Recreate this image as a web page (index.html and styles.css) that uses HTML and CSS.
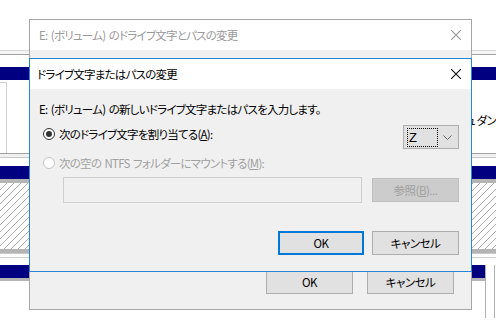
FILE: index.html
```html
<!DOCTYPE html>
<html lang="ja">
<head>
  <meta charset="UTF-8">
  <title>ドライブ文字またはパスの変更</title>
  <link rel="stylesheet" href="styles.css">
</head>
<body>

  <!-- Disk management window behind the dialogs -->
  <div class="desk">
    <div class="strip top"></div>
    <div class="strip rule"></div>
    <div class="strip gap"></div>
    <div class="strip navy"></div>
    <div class="strip panel">
      <div class="panel-box"></div>
      <span class="panel-text">ュ ダン</span>
    </div>
    <div class="strip rule2"></div>
    <div class="strip navy"></div>
    <div class="strip bar"></div>
    <div class="strip hatch"></div>
    <div class="strip bar"></div>
    <div class="strip gap2"></div>
    <div class="strip navy-row">
      <div class="navy-cell"></div>
      <div class="side-cell"></div>
    </div>
    <div class="strip tail">
      <div class="tail-left"></div>
      <div class="side-cell"></div>
    </div>
  </div>

  <!-- Back dialog -->
  <div class="dialog back">
    <div class="titlebar back-title">
      <span>E: (ボリューム) のドライブ文字とパスの変更</span>
      <svg class="close" width="10" height="10" viewBox="0 0 10 10"><path d="M0 0L10 10M10 0L0 10" stroke="#999" stroke-width="1.1" fill="none"/></svg>
    </div>
    <div class="dlg-body back-body">
      <div class="btn-row wide">
        <button class="btn">OK</button>
        <button class="btn">キャンセル</button>
      </div>
    </div>
  </div>

  <!-- Front dialog -->
  <div class="dialog front">
    <div class="titlebar front-title">
      <span>ドライブ文字またはパスの変更</span>
      <svg class="close" width="10" height="10" viewBox="0 0 10 10"><path d="M0 0L10 10M10 0L0 10" stroke="#111" stroke-width="1.1" fill="none"/></svg>
    </div>
    <div class="dlg-body front-body">
      <p class="prompt">E: (ボリューム) の新しいドライブ文字またはパスを入力します。</p>

      <div class="opt-row first">
        <label class="radio"><span class="dot on"></span>次のドライブ文字を割り当てる(<u>A</u>):</label>
        <div class="select">
          <span class="focus">Z</span>
          <svg class="chev" width="9" height="5" viewBox="0 0 9 5"><path d="M0.5 0.5L4.5 4.5L8.5 0.5" stroke="#666" fill="none"/></svg>
        </div>
      </div>

      <div class="opt-row">
        <label class="radio off"><span class="dot"></span>次の空の NTFS フォルダーにマウントする(<u>M</u>):</label>
      </div>

      <div class="path-row">
        <div class="field"></div>
        <button class="btn disabled">参照(<u>B</u>)...</button>
      </div>

      <div class="btn-row">
        <button class="btn default">OK</button>
        <button class="btn">キャンセル</button>
      </div>
    </div>
  </div>

</body>
</html>
```

FILE: styles.css
```css
body {
  margin: 0;
  background: #fff;
  font-family: "Noto Sans CJK JP", "Noto Sans", sans-serif;
  font-size: 11.5px;
  letter-spacing: -0.75px;
  word-spacing: 1.5px;
  font-feature-settings: "palt";
  color: #000;
  position: relative;
  width: 496px;
  height: 330px;
  overflow: hidden;
}

/* background window */
.desk { width: 496px; }
.strip { width: 100%; }
.top { height: 50px; }
.rule {
  height: 3px;
  border-top: 1px solid #d8d8d8;
  border-bottom: 1px solid #a0a0a0;
  background: #f4f4f4;
}
.gap { height: 12px; }
.navy { height: 13px; background: #000080; }
.panel {
  height: 73px;
  display: flex;
  align-items: center;
  overflow: hidden;
}
.panel-box {
  width: 22px;
  height: 70px;
  align-self: flex-end;
  border-top: 1px solid #d0d0d0;
  border-right: 1px solid #d0d0d0;
  margin-right: 4px;
}
.panel-text {
  white-space: nowrap;
  margin-left: 455px;
  margin-top: 6px;
  word-spacing: 0;
}
.rule2 {
  height: 8px;
  border-top: 1px solid #a0a0a0;
  background: linear-gradient(#f0f0f0 0 3px, #c8c8c8 3px 4px, #fff 4px);
  padding-bottom: 4px;
}
.bar { height: 4px; background: #b4b4b4; }
.hatch {
  height: 66px;
  background: repeating-linear-gradient(135deg, #fff 0 4.3px, #acacac 4.3px 5px);
}
.gap2 {
  height: 11px;
  border-top: 1px solid #c8c8c8;
  background: linear-gradient(#fff 0 3px, #d0d0d0 3px 4px, #fff 4px);
}
.navy-row { height: 13px; display: flex; }
.navy-cell { flex: 1; background: #000080; }
.side-cell {
  width: 8px;
  border-left: 1px solid #b0b0b0;
  border-right: 1px solid #b0b0b0;
  margin-right: 1px;
}
.tail { height: 40px; display: flex; }
.tail-left { flex: 1; border-top: 3px solid #b4b4b4; }

/* dialogs */
.dialog {
  position: absolute;
  left: 29px;
  width: 441px;
  display: flex;
  flex-direction: column;
  background: #f0f0f0;
}
.back {
  top: 19px;
  height: 289px;
  border: 1px solid #a6a6a6;
}
.front {
  top: 58px;
  height: 212px;
  border: 1px solid #2585d6;
}
.titlebar {
  height: 30px;
  flex: none;
  background: #fff;
  display: flex;
  align-items: center;
  justify-content: space-between;
  padding: 0 10px 0 9px;
}
.back-title { color: #999; }
.front-title { padding-left: 7px; }
.dlg-body { flex: 1; display: flex; flex-direction: column; }
.back-body {
  justify-content: flex-end;
  padding: 0 17px 15px 0;
}
.front-body { padding: 11px 12px 0 9px; }

.prompt { margin: 0; line-height: 18px; }

.opt-row { display: flex; margin-top: 5px; }
.opt-row.first { margin-top: 7px; }
.radio {
  display: flex;
  align-items: center;
  height: 18px;
  margin-left: 4px;
  white-space: pre;
}
.radio u, .btn u { text-decoration: underline; }
.dot {
  width: 10px;
  height: 10px;
  border: 1px solid #333;
  border-radius: 50%;
  background: #fff;
  margin-right: 4px;
  display: flex;
  align-items: center;
  justify-content: center;
}
.dot.on::after {
  content: "";
  width: 6px;
  height: 6px;
  border-radius: 50%;
  background: #333;
}
.radio.off { color: #a0a0a0; }
.radio.off .dot { border-color: #c4c4c4; }

.select {
  margin-left: auto;
  height: 22px;
  border: 1px solid #adadad;
  background: #e1e1e1;
  display: flex;
  align-items: center;
  justify-content: space-between;
  padding: 0 6px 0 3px;
  box-sizing: content-box;
  width: 45px;
}
.focus {
  width: 28px;
  height: 17px;
  border: 1px dotted #000;
  line-height: 17px;
  padding-left: 1px;
  font-family: "Liberation Sans", sans-serif;
  font-size: 13px;
  letter-spacing: 0;
}

.path-row {
  display: flex;
  align-items: center;
  margin-top: 5px;
}
.field {
  width: 297px;
  height: 24px;
  margin-left: 24px;
  border: 1px solid #cfcfcf;
  background: #f0f0f0;
}

.btn {
  font-family: inherit;
  font-size: 11.5px;
  letter-spacing: -0.5px;
  font-feature-settings: "palt";
  width: 87px;
  height: 24px;
  border: 1px solid #adadad;
  background: #e1e1e1;
  color: #000;
  padding: 0;
}
.path-row .btn { margin-left: auto; }
.btn.disabled {
  background: #cccccc;
  border-color: #bfbfbf;
  color: #a0a0a0;
}
.btn.default { width: 86px; border: 2px solid #0078d7; }

.btn-row {
  display: flex;
  justify-content: flex-end;
  gap: 8px;
  margin-top: 28px;
}
.btn-row.wide { gap: 14px; margin-top: 0; }
```
